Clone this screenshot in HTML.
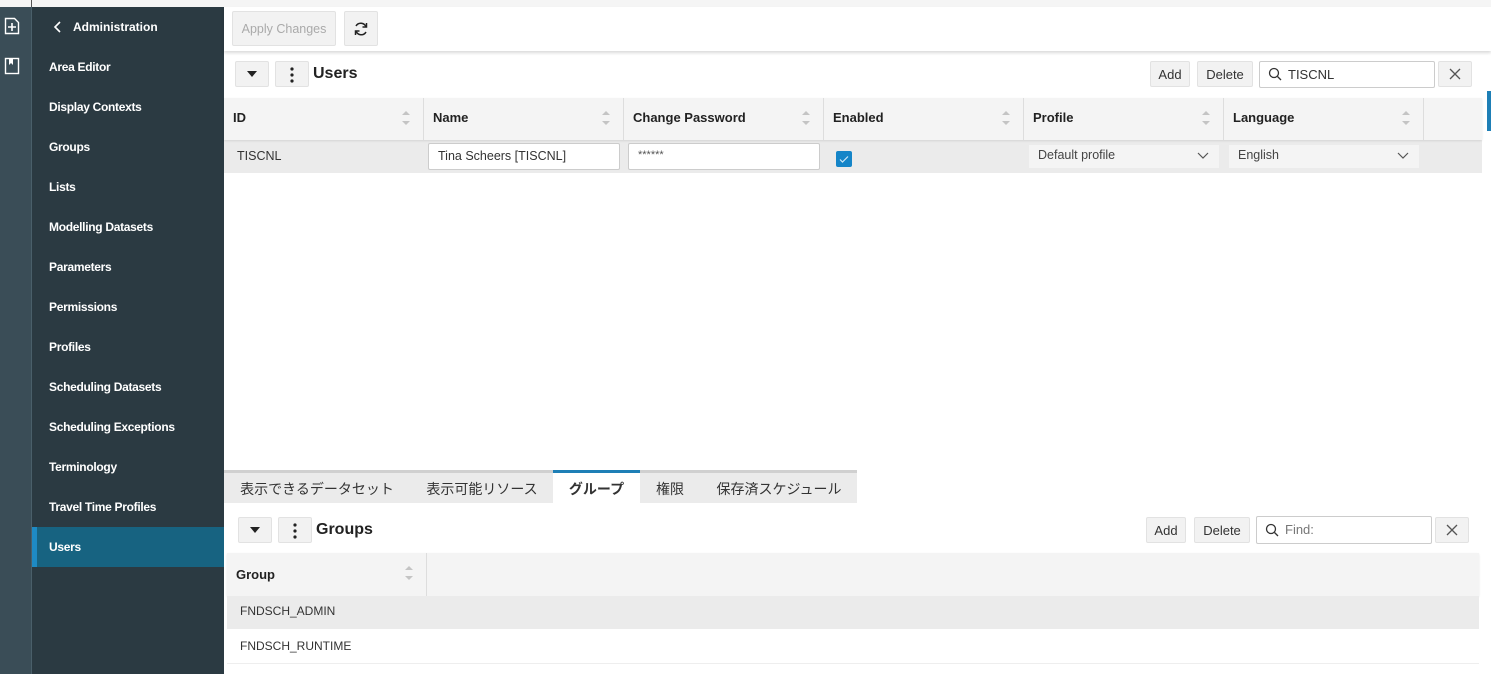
<!DOCTYPE html>
<html><head><meta charset="utf-8"><style>
*{box-sizing:border-box;margin:0;padding:0}
body{width:1491px;height:674px;overflow:hidden;background:#fff;font-family:"Liberation Sans","Noto Sans CJK JP",sans-serif;font-size:13px;color:#333;position:relative}
.a{position:absolute}
.rail{left:0;top:7px;width:32px;height:667px;background:#3a4d57;border-right:1px solid #4a5f6a}
.side{left:32px;top:7px;width:192px;height:667px;background:#2b3a42}
.it{position:absolute;left:17px;color:#fff;font-size:12px;font-weight:bold;letter-spacing:-0.3px;white-space:nowrap}
.btn{position:absolute;background:#f2f2f2;border:1px solid #e2e2e2;border-radius:2px;text-align:center;color:#333;font-size:13px;white-space:nowrap}
.th{position:absolute;top:98px;height:42px;background:#f4f4f4;border-right:1px solid #ddd;font-weight:bold;font-size:13px;padding:12px 9px;color:#222}
.inp{position:absolute;background:#fff;border:1px solid #ccc;border-radius:2px;font-size:13px;padding:5px 9px;height:27px;white-space:nowrap}
.sel{position:absolute;background:#f4f4f4;height:23px;font-size:13px;padding:3px 9px;color:#444}
.tab{position:absolute;top:473px;height:30px;font-size:14px;padding:6px 0;color:#333;text-align:center;white-space:nowrap}
</style></head><body>
<div class="a" style="left:0;top:0;width:1491px;height:7px;background:#f5f5f5"></div>
<div class="a" style="left:31px;top:0;width:1px;height:7px;background:#555"></div>
<div class="a rail"></div>
<svg class="a" style="left:4px;top:17px" width="16" height="18" viewBox="0 0 16 18"><path d="M1.5 1.5h9l4 4v11h-13z" fill="none" stroke="#fff" stroke-width="1.4"/><path d="M8 6v8M4 10h8" stroke="#fff" stroke-width="1.6"/></svg>
<svg class="a" style="left:4px;top:57px" width="16" height="18" viewBox="0 0 16 18"><rect x="1.5" y="1.5" width="13" height="15" fill="none" stroke="#fff" stroke-width="1.4"/><path d="M5 2v6l2-2 2 2V2" fill="#fff"/></svg>
<div class="a side"></div>
<svg class="a" style="left:53px;top:20px" width="10" height="14" viewBox="0 0 10 14"><path d="M7 2L2 7l5 5" fill="none" stroke="#fff" stroke-width="1.6"/></svg>
<div class="a" style="left:73px;top:20px;color:#fff;font-size:12px;font-weight:bold">Administration</div>
<div class="a" style="left:32px;top:527px;width:192px;height:40px;background:#176381;border-left:5px solid #1e8ac4"></div>
<div class="a" style="left:32px;top:1px;width:192px">
<div class="it" style="top:59px">Area Editor</div>
<div class="it" style="top:99px">Display Contexts</div>
<div class="it" style="top:139px">Groups</div>
<div class="it" style="top:179px">Lists</div>
<div class="it" style="top:219px">Modelling Datasets</div>
<div class="it" style="top:259px">Parameters</div>
<div class="it" style="top:299px">Permissions</div>
<div class="it" style="top:339px">Profiles</div>
<div class="it" style="top:379px">Scheduling Datasets</div>
<div class="it" style="top:419px">Scheduling Exceptions</div>
<div class="it" style="top:459px">Terminology</div>
<div class="it" style="top:499px">Travel Time Profiles</div>
<div class="it" style="top:539px">Users</div>
</div>
<div class="a" style="left:224px;top:7px;width:1267px;height:44px;background:#fff;box-shadow:0 2px 3px rgba(0,0,0,.15)"></div>
<div class="btn" style="left:232px;top:11px;width:104px;height:35px;line-height:34px;color:#aaa;font-size:12.5px">Apply Changes</div>
<div class="btn" style="left:344px;top:11px;width:34px;height:35px"><svg style="margin-top:9px" width="16" height="16" viewBox="0 0 16 16"><path d="M13 6A5.5 5.5 0 0 0 3 5M3 10a5.5 5.5 0 0 0 10 1" fill="none" stroke="#222" stroke-width="1.5"/><path d="M13.5 2v4h-4M2.5 14v-4h4" fill="none" stroke="#222" stroke-width="1.5"/></svg></div>
<div class="btn" style="left:235px;top:61px;width:34px;height:26px"><svg style="margin-top:9px" width="10" height="6"><path d="M0 0h10L5 6z" fill="#222"/></svg></div>
<div class="btn" style="left:275px;top:61px;width:34px;height:26px"><svg style="margin-top:5px" width="4" height="16"><circle cx="2" cy="2" r="1.6" fill="#222"/><circle cx="2" cy="8" r="1.6" fill="#222"/><circle cx="2" cy="14" r="1.6" fill="#222"/></svg></div>
<div class="a" style="left:313px;top:65px;font-size:16px;font-weight:bold;color:#222">Users</div>
<div class="btn" style="left:1150px;top:61px;width:40px;height:26px;line-height:25px">Add</div>
<div class="btn" style="left:1197px;top:61px;width:56px;height:26px;line-height:25px">Delete</div>
<div class="inp" style="left:1259px;top:61px;width:176px;height:27px;padding-left:28px">TISCNL</div>
<svg class="a" style="left:1268px;top:67px" width="14" height="14"><circle cx="6" cy="6" r="4.5" fill="none" stroke="#333" stroke-width="1.3"/><path d="M9.5 9.5L13 13" stroke="#333" stroke-width="1.3"/></svg>
<div class="btn" style="left:1438px;top:61px;width:34px;height:26px"><svg style="margin-top:6px" width="12" height="12"><path d="M1 1l10 10M11 1L1 11" stroke="#555" stroke-width="1.3"/></svg></div>
<div class="a" style="left:1487px;top:91px;width:4px;height:40px;background:#1e7fb6"></div>
<div class="a" style="left:224px;top:140px;width:1258px;height:33px;background:#ebebeb"></div>
<div class="a" style="left:224px;top:98px;width:1258px;height:42px;background:#f4f4f4;box-shadow:0 1px 2px rgba(0,0,0,.1)"></div>
<div class="th" style="left:224px;width:200px">ID</div>
<div class="th" style="left:424px;width:200px">Name</div>
<div class="th" style="left:624px;width:200px">Change Password</div>
<div class="th" style="left:824px;width:200px">Enabled</div>
<div class="th" style="left:1024px;width:200px">Profile</div>
<div class="th" style="left:1224px;width:200px">Language</div>
<svg width="0" height="0" style="position:absolute"><defs><g id="s"><path d="M0 5l4-4 4 4z M0 11l4 4 4-4z" fill="#c4c4c4"/></g></defs></svg>
<svg class="a" style="left:402px;top:110px" width="8" height="16"><use href="#s"/></svg>
<svg class="a" style="left:602px;top:110px" width="8" height="16"><use href="#s"/></svg>
<svg class="a" style="left:802px;top:110px" width="8" height="16"><use href="#s"/></svg>
<svg class="a" style="left:1002px;top:110px" width="8" height="16"><use href="#s"/></svg>
<svg class="a" style="left:1202px;top:110px" width="8" height="16"><use href="#s"/></svg>
<svg class="a" style="left:1402px;top:110px" width="8" height="16"><use href="#s"/></svg>
<div class="a" style="left:237px;top:149px;font-size:12.5px">TISCNL</div>
<div class="inp" style="left:428px;top:143px;width:192px;font-size:12.5px">Tina Scheers [TISCNL]</div>
<div class="inp" style="left:628px;top:143px;width:192px;font-size:11px;color:#555">******</div>
<div class="a" style="left:836px;top:151px;width:16px;height:16px;background:#1585c8;border-radius:2px"><svg width="16" height="16"><path d="M4 8.5l2.5 2.5L12 5.5" fill="none" stroke="#cfe8f7" stroke-width="1.2"/></svg></div>
<div class="sel" style="left:1029px;top:145px;width:190px;font-size:12.5px">Default profile</div>
<div class="sel" style="left:1229px;top:145px;width:190px;font-size:12.5px">English</div>
<svg class="a" style="left:1197px;top:152px" width="12" height="8"><path d="M1 1l5 5 5-5" fill="none" stroke="#555" stroke-width="1.2"/></svg>
<svg class="a" style="left:1397px;top:152px" width="12" height="8"><path d="M1 1l5 5 5-5" fill="none" stroke="#555" stroke-width="1.2"/></svg>
<div class="a" style="left:224px;top:470px;width:633px;height:33px;background:#ebebeb;border-top:3px solid #d0d0d0"></div>
<div class="a" style="left:553px;top:470px;width:87px;height:33px;background:#fff;border-top:3px solid #1e7fb6"></div>
<div class="tab" style="left:232px;width:170px">表示できるデータセット</div>
<div class="tab" style="left:418px;width:128px">表示可能リソース</div>
<div class="tab" style="left:553px;width:87px;font-weight:bold">グループ</div>
<div class="tab" style="left:648px;width:44px">権限</div>
<div class="tab" style="left:708px;width:142px">保存済スケジュール</div>
<div class="btn" style="left:238px;top:517px;width:34px;height:26px"><svg style="margin-top:9px" width="10" height="6"><path d="M0 0h10L5 6z" fill="#222"/></svg></div>
<div class="btn" style="left:278px;top:517px;width:34px;height:26px"><svg style="margin-top:5px" width="4" height="16"><circle cx="2" cy="2" r="1.6" fill="#222"/><circle cx="2" cy="8" r="1.6" fill="#222"/><circle cx="2" cy="14" r="1.6" fill="#222"/></svg></div>
<div class="a" style="left:316px;top:521px;font-size:16px;font-weight:bold;color:#222">Groups</div>
<div class="btn" style="left:1146px;top:517px;width:40px;height:26px;line-height:25px">Add</div>
<div class="btn" style="left:1194px;top:517px;width:56px;height:26px;line-height:25px">Delete</div>
<div class="inp" style="left:1256px;top:516px;width:176px;height:28px;padding-left:28px;color:#777">Find:</div>
<svg class="a" style="left:1265px;top:523px" width="14" height="14"><circle cx="6" cy="6" r="4.5" fill="none" stroke="#333" stroke-width="1.3"/><path d="M9.5 9.5L13 13" stroke="#333" stroke-width="1.3"/></svg>
<div class="btn" style="left:1435px;top:517px;width:34px;height:26px"><svg style="margin-top:6px" width="12" height="12"><path d="M1 1l10 10M11 1L1 11" stroke="#555" stroke-width="1.3"/></svg></div>
<div class="a" style="left:227px;top:553px;width:1252px;height:43px;background:#f4f4f4;box-shadow:0 1px 2px rgba(0,0,0,.1)"></div>
<div class="a" style="left:426px;top:553px;width:1px;height:43px;background:#ddd"></div>
<div class="a" style="left:236px;top:567px;font-weight:bold;color:#222">Group</div>
<svg class="a" style="left:405px;top:565px" width="8" height="16"><use href="#s"/></svg>
<div class="a" style="left:227px;top:596px;width:1252px;height:33px;background:#ebebeb"></div>
<div class="a" style="left:227px;top:663px;width:1252px;height:1px;background:#eee"></div>
<div class="a" style="left:240px;top:604px;font-size:12px;color:#333">FNDSCH_ADMIN</div>
<div class="a" style="left:240px;top:639px;font-size:12px;color:#333">FNDSCH_RUNTIME</div>
</body></html>
